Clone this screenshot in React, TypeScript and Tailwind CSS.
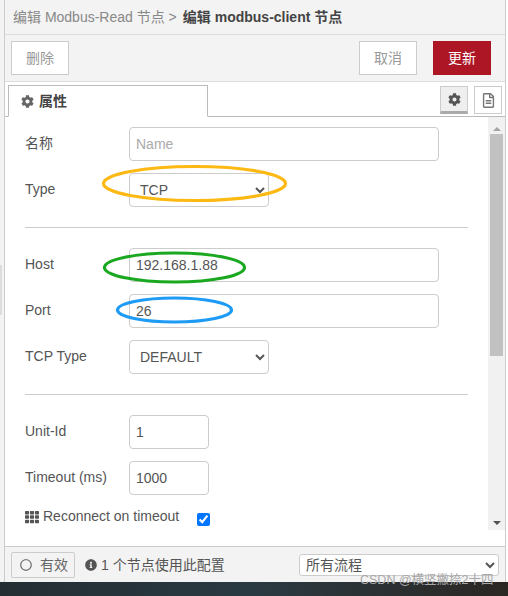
import { FaCog, FaInfoCircle, FaRegCircle, FaRegFileAlt, FaTh } from 'react-icons/fa';

const fieldClass =
  'h-[34px] rounded-[4px] border border-[#ccc] bg-white px-[6px] text-sm text-[#555] outline-none placeholder:text-[#aaa]';
const selectClass =
  'h-[34px] w-[140px] rounded-[4px] border border-[#ccc] bg-white pl-[6px] text-sm text-[#555] outline-none';

function Row({ label, children }: { label: string; children: React.ReactNode }) {
  return (
    <div className="mb-3 flex h-[34px]">
      <label className="w-[104px] pt-[6px] text-sm leading-5 text-[#555]">{label}</label>
      {children}
    </div>
  );
}

function Divider() {
  return <hr className="mb-5 mt-5 w-[443px] border-t border-[#ccc]" />;
}

export default function App() {
  return (
    <div className="relative flex h-[596px] w-[508px] flex-col overflow-hidden bg-white font-['Liberation_Sans','Noto_Sans_CJK_SC',sans-serif] text-sm text-[#555]">
      <div className="flex min-h-0 flex-1">
        {/* left gutter with the resize handle */}
        <div className="flex w-[5px] shrink-0 items-start border-r border-[#ccc] bg-[#f3f3f3]">
          <div className="mt-[265px] h-[50px] w-[2px] bg-[#ddd]" />
        </div>

        <div className="flex min-w-0 flex-1 flex-col">
          <div className="flex h-[35px] items-center border-b border-[#ddd] bg-[#f3f3f3] pl-2 text-sm">
            <span className="text-[#888]">编辑 Modbus-Read 节点 &gt; </span>
            <span className="ml-[6px] font-bold text-[#444]">编辑 modbus-client 节点</span>
          </div>

          <div className="flex h-[47px] items-center justify-between border-b border-[#ddd] bg-[#f3f3f3] pl-[6px] pr-[14px]">
            <button className="h-[34px] w-[58px] border border-[#ccc] bg-white text-sm text-[#999]">删除</button>
            <div className="flex gap-4">
              <button className="h-[34px] w-[58px] border border-[#ccc] bg-white text-sm text-[#999]">取消</button>
              <button className="h-[34px] w-[58px] bg-[#ad1625] text-sm text-white">更新</button>
            </div>
          </div>

          <div className="flex h-[35px] items-end justify-between border-b border-[#bbb] pl-[3px] pr-[3px]">
            <div className="-mb-px flex h-[32px] w-[200px] items-center gap-[5px] border border-b-white border-[#bbb] bg-white pl-3 text-sm font-bold text-[#444]">
              <FaCog className="text-[13px] text-[#666]" />
              属性
            </div>
            <div className="mb-[2px] flex gap-[6px]">
              <div className="flex h-7 w-7 items-center justify-center border border-b-[3px] border-[#ccc] border-b-[#aaa] bg-[#efefef]">
                <FaCog className="text-[13px] text-[#555]" />
              </div>
              <div className="flex h-7 w-7 items-center justify-center border border-[#ccc] bg-white">
                <FaRegFileAlt className="text-[15px] text-[#777]" />
              </div>
            </div>
          </div>

          <div className="flex min-h-0 flex-1">
            <div className="min-w-0 flex-1 overflow-hidden pl-5 pt-[10px]">
              <Row label="名称">
                <input className={`${fieldClass} w-[310px]`} placeholder="Name" />
              </Row>
              <Row label="Type">
                <select className={selectClass} defaultValue="TCP">
                  <option>TCP</option>
                </select>
              </Row>
              <Divider />
              <Row label="Host">
                <input className={`${fieldClass} w-[310px]`} defaultValue="192.168.1.88" />
              </Row>
              <Row label="Port">
                <input className={`${fieldClass} w-[310px]`} defaultValue="26" />
              </Row>
              <Row label="TCP Type">
                <select className={selectClass} defaultValue="DEFAULT">
                  <option>DEFAULT</option>
                </select>
              </Row>
              <Divider />
              <Row label="Unit-Id">
                <input className={`${fieldClass} w-20`} defaultValue="1" />
              </Row>
              <Row label="Timeout (ms)">
                <input className={`${fieldClass} w-20`} defaultValue="1000" />
              </Row>
              <div className="flex h-5 items-start">
                <FaTh className="mr-1 mt-[3px] text-sm text-[#555]" />
                <span className="leading-[18px]">Reconnect on timeout</span>
                <input type="checkbox" defaultChecked className="ml-[18px] mt-[6px] h-[13px] w-[13px] accent-[#0075ff]" />
              </div>
            </div>

            {/* scrollbar */}
            <div className="mb-4 flex w-[17px] shrink-0 flex-col items-center bg-[#f1f1f1]">
              <div className="mt-[10px] h-0 w-0 border-x-[4px] border-b-[4px] border-x-transparent border-b-[#a3a3a3]" />
              <div className="mt-[3px] h-[222px] w-[13px] bg-[#c1c1c1]" />
              <div className="mb-[5px] mt-auto h-0 w-0 border-x-[4px] border-t-[4px] border-x-transparent border-t-[#505050]" />
            </div>
          </div>

          <div className="flex h-[36px] items-center border-t border-[#ccc] bg-[#f3f3f3] pl-[6px] pr-[6px]">
            <div className="flex h-[26px] w-[64px] items-center gap-2 rounded-[2px] border border-[#ccc] pl-2 text-sm text-[#666]">
              <FaRegCircle className="text-xs text-[#666]" />
              有效
            </div>
            <FaInfoCircle className="ml-[10px] text-xs text-[#555]" />
            <span className="ml-1">1 个节点使用此配置</span>
            <select className="ml-auto h-[22px] w-[200px] rounded-[3px] border border-[#ccc] bg-white pl-[2px] text-sm text-[#555] outline-none" defaultValue="所有流程">
              <option>所有流程</option>
            </select>
          </div>
        </div>

        <div className="w-[3px] shrink-0 border-l border-[#ccc] bg-white" />
      </div>

      <div className="h-[14px] shrink-0 bg-gradient-to-r from-[#232e33] via-[#2a3a42] to-[#2b2723]" />

      {/* hand-drawn annotations on top of the screenshot */}
      <svg className="pointer-events-none absolute inset-0" width="508" height="596" fill="none" strokeWidth="3.2">
        <ellipse cx="194.5" cy="183.5" rx="91" ry="17" stroke="#fdb913" />
        <ellipse cx="174.5" cy="267.5" rx="70" ry="14.5" stroke="#1aa821" />
        <ellipse cx="174.5" cy="310" rx="57" ry="12" stroke="#1e9bf5" />
      </svg>

      <span className="absolute left-[360px] top-[573px] text-[12.5px] leading-[14px] text-[#a8a8a8]">CSDN @横竖撇捺2十四</span>
    </div>
  );
}
